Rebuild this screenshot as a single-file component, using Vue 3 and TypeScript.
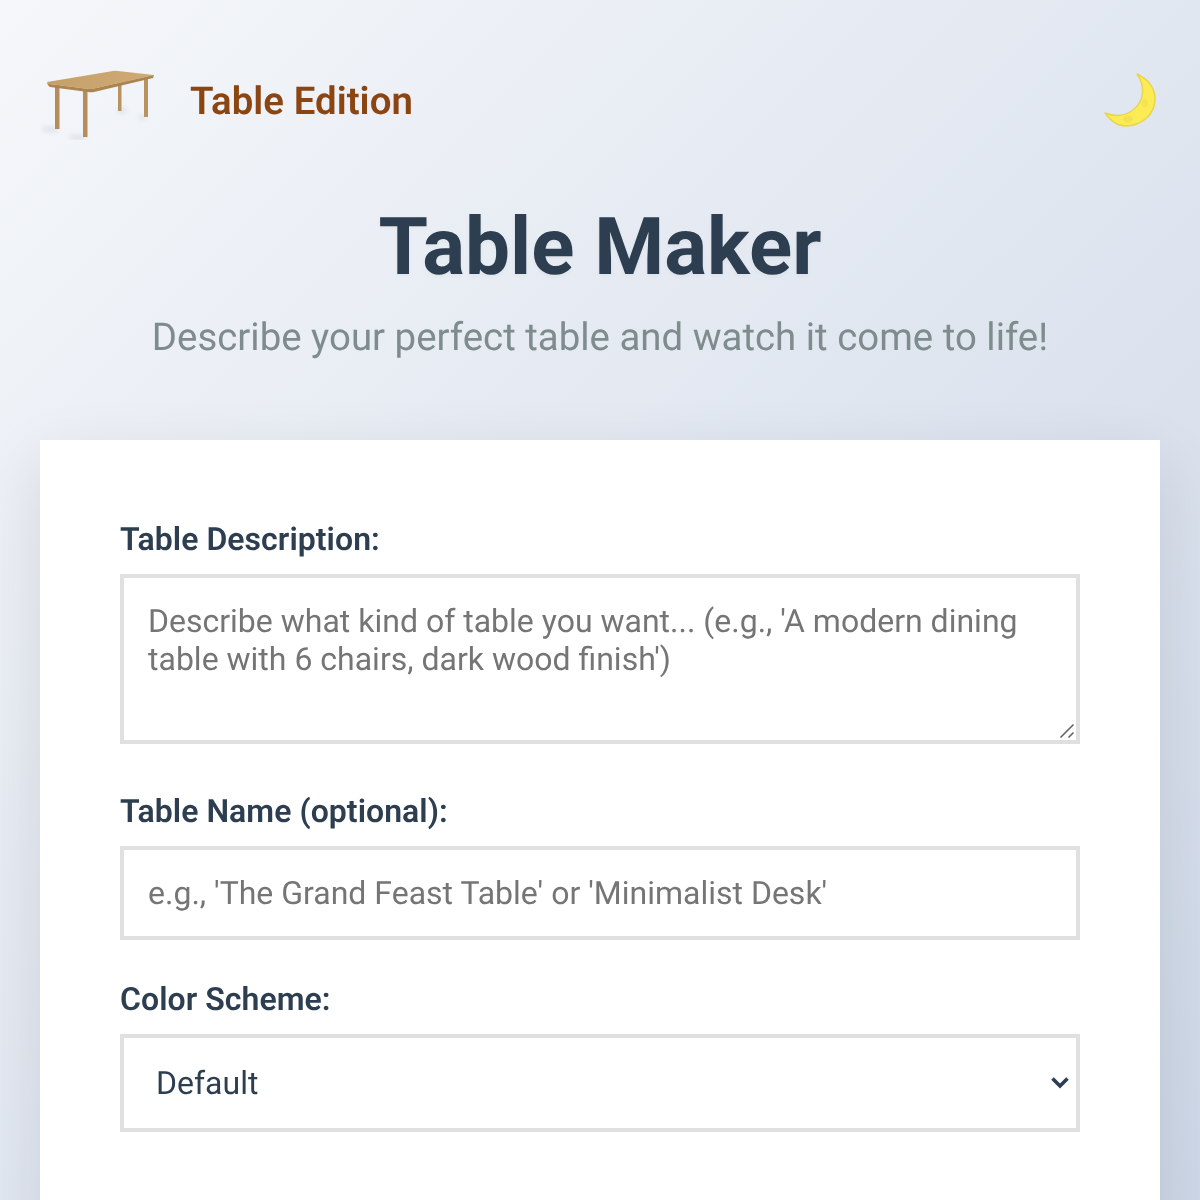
<template>
  <div class="page">
    <header class="top">
      <div class="brand">
        <svg class="table-logo" width="120" height="80" viewBox="0 0 120 80" aria-hidden="true">
          <defs>
            <filter id="soft" x="-10%" y="-10%" width="120%" height="120%"><feGaussianBlur stdDeviation="0.7" /></filter>
            <filter id="shade" x="-30%" y="-30%" width="160%" height="160%"><feGaussianBlur stdDeviation="2.5" /></filter>
            <linearGradient id="top" x1="0" y1="0" x2="1" y2="0">
              <stop offset="0" stop-color="#c6a06a" />
              <stop offset="1" stop-color="#cfaa75" />
            </linearGradient>
          </defs>
          <path d="M3 69l14 1M30 77l15 1M86 50l-8 1M100 58l5-1" stroke="#aeb4bd" stroke-width="3" opacity=".45" filter="url(#shade)" />
          <g filter="url(#soft)">
            <path d="M78 24h3.500v27h-3.500zM104 18h4v39h-4z" fill="#b8925f" />
            <path d="M15 25h4.500v44h-4.500zM43 31h4.500v46h-4.500z" fill="#b68d59" />
            <path d="M7 22L73 11Q75 10.500 78 11L114 15L54 28.500Q52 29 49 29L9 24Q7 23 7 22Z" fill="url(#top)" />
            <path d="M7 22Q7 23 9 24L49 29Q52 29 54 28.500L114 15L113 18L54 32Q51 32.500 48 32L10 27Q7 25 7 22Z" fill="#ab8450" />
          </g>
        </svg>
        <span class="edition">Table Edition</span>
      </div>
      <button class="theme" aria-label="Toggle theme">
        <svg width="54" height="54" viewBox="0 0 54 54" aria-hidden="true">
          <defs>
            <filter id="moonsoft"><feGaussianBlur stdDeviation="0.35" /></filter>
          </defs>
          <g filter="url(#moonsoft)">
            <path d="M34 1C45 6 52 15 52 26C52 42 38 53 22 53C14 53 7 47 2 40C12 44 22 43 30 37C42 28 42 12 34 1Z" fill="#fbeb55" stroke="#e8d648" stroke-width="1.500" stroke-linejoin="round" />
            <ellipse cx="25" cy="46" rx="5" ry="3.500" fill="#f3e052" />
            <ellipse cx="42" cy="30" rx="3" ry="4" fill="#f5e352" />
          </g>
        </svg>
      </button>
    </header>

    <div class="hero">
      <h1>Table Maker</h1>
      <p>Describe your perfect table and watch it come to life!</p>
    </div>

    <main class="card">
      <div class="field">
        <label for="desc">Table Description:</label>
        <div class="area-wrap">
          <textarea id="desc" rows="3" :placeholder="descHint"></textarea>
          <svg class="grip" width="16" height="16" viewBox="0 0 16 16" aria-hidden="true">
            <path d="M1.500 14.500L14.500 1.500M9.500 14.500L14.500 9.500" stroke="#666" stroke-width="1.600" fill="none" />
          </svg>
        </div>
      </div>
      <div class="field">
        <label for="name">Table Name (optional):</label>
        <input id="name" type="text" :placeholder="nameHint" />
      </div>
      <div class="field">
        <label for="scheme">Color Scheme:</label>
        <div class="select-wrap">
          <select id="scheme" v-model="scheme">
            <option v-for="s in schemes" :key="s">{{ s }}</option>
          </select>
          <svg class="chev" width="20" height="14" viewBox="0 0 20 14" aria-hidden="true">
            <path d="M2.500 3.500L10 11L17.500 3.500" stroke="#2c3e50" stroke-width="3.600" fill="none" />
          </svg>
        </div>
      </div>
    </main>
  </div>
</template>

<script setup lang="ts">
import { ref } from 'vue'

const descHint = "Describe what kind of table you want... (e.g., 'A modern dining table with 6 chairs, dark wood finish')"
const nameHint = "e.g., 'The Grand Feast Table' or 'Minimalist Desk'"
const schemes = ['Default', 'Oak', 'Walnut', 'Modern']
const scheme = ref('Default')
</script>

<style>
html, body {
  margin: 0;
}
body {
  min-height: 1200px;
  background: linear-gradient(135deg, #f5f7fa 0%, #c3cfe2 100%) no-repeat;
  background-size: 100% 1800px;
}
</style>

<style scoped>
.page {
  height: 1200px;
  overflow: hidden;
  padding: 60px 40px 0;
  box-sizing: border-box;
  font-family: Roboto, sans-serif;
  text-rendering: geometricPrecision;
  will-change: opacity;
}

.top {
  display: flex;
  align-items: center;
  justify-content: space-between;
  height: 80px;
}

.brand {
  display: flex;
  align-items: center;
  gap: 30px;
}

.edition {
  font-size: 38.4px;
  line-height: 45px;
  padding-top: 2px;
  font-weight: 600;
  letter-spacing: 0.05px;
  color: #8b4513;
}

.theme {
  display: flex;
  padding: 0;
  margin-right: 3px;
  border: none;
  background: none;
}

.hero {
  text-align: center;
  margin-top: 60px;
}

h1 {
  margin: 0;
  font-size: 80px;
  line-height: 94px;
  font-weight: 700;
  color: #2c3e50;
  text-shadow: 0 2px 4px rgba(0, 0, 0, 0.04);
}

.hero p {
  margin: 21px 0 0;
  font-size: 38.4px;
  line-height: 45px;
  color: #7f8c8d;
}

.card {
  margin-top: 80px;
  padding: 80px 80px 0;
  height: 800px;
  background: #fff;
  box-shadow: 0 20px 60px rgba(0, 0, 0, 0.1);
}

.field {
  margin-bottom: 40px;
}

label {
  display: block;
  margin-bottom: 16px;
  font-size: 32px;
  line-height: 38px;
  font-weight: 600;
  letter-spacing: 0.05px;
  color: #2c3e50;
}

textarea,
input,
select {
  display: block;
  width: 100%;
  box-sizing: border-box;
  border: 4px solid #e0e0e0;
  border-radius: 0;
  background: #fff;
  font-family: inherit;
  font-size: 32px;
  text-rendering: geometricPrecision;
  outline: none;
}

textarea::placeholder,
input::placeholder {
  color: #757575;
}

textarea {
  height: 170px;
  padding: 24px;
  line-height: 38px;
  resize: none;
}

input {
  height: 94px;
  padding: 24px;
}

select {
  height: 98px;
  padding: 24px 32px;
  color: #2c3e50;
  appearance: none;
}

.area-wrap,
.select-wrap {
  position: relative;
}

.area-wrap {
  padding-bottom: 8px;
}

.grip {
  position: absolute;
  right: 5px;
  bottom: 13px;
}

.chev {
  position: absolute;
  right: 10px;
  top: 41px;
  pointer-events: none;
}
</style>
